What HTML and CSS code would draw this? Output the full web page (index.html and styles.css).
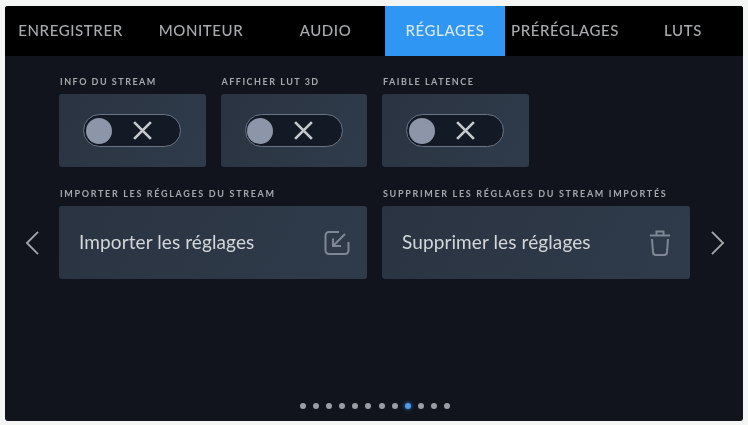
FILE: index.html
```html
<!DOCTYPE html>
<html lang="fr">
<head>
<meta charset="utf-8">
<title>Réglages</title>
<link rel="stylesheet" href="styles.css">
</head>
<body>
<main class="screen">
  <nav class="tabs">
    <a class="tab t1">ENREGISTRER</a>
    <a class="tab t2">MONITEUR</a>
    <a class="tab t3">AUDIO</a>
    <a class="tab t4 active">RÉGLAGES</a>
    <a class="tab t5">PRÉRÉGLAGES</a>
    <a class="tab t6">LUTS</a>
  </nav>
  <section class="settings">
    <div class="toggles">
      <div class="field">
        <div class="label">INFO DU STREAM</div>
        <div class="card toggle-card">
          <div class="toggle"><span class="knob"></span><svg class="x" viewBox="0 0 20 20"><path d="M2 2 18 18M18 2 2 18"/></svg></div>
        </div>
      </div>
      <div class="field">
        <div class="label">AFFICHER LUT 3D</div>
        <div class="card toggle-card">
          <div class="toggle"><span class="knob"></span><svg class="x" viewBox="0 0 20 20"><path d="M2 2 18 18M18 2 2 18"/></svg></div>
        </div>
      </div>
      <div class="field">
        <div class="label">FAIBLE LATENCE</div>
        <div class="card toggle-card">
          <div class="toggle"><span class="knob"></span><svg class="x" viewBox="0 0 20 20"><path d="M2 2 18 18M18 2 2 18"/></svg></div>
        </div>
      </div>
    </div>
    <div class="nav-cell prev">
      <svg class="chevron" viewBox="0 0 16 28"><path d="M14 2 2 14 14 26"/></svg>
    </div>
    <div class="actions">
      <div class="field wide">
        <div class="label wide-label">IMPORTER LES RÉGLAGES DU STREAM</div>
        <div class="card action-card">
          <span class="action-text">Importer les réglages</span>
          <svg class="icon-import" viewBox="0 0 28 28"><path d="M16 3H6a3.500 3.500 0 0 0-3.500 3.500v15A3.500 3.500 0 0 0 6 25h16a3.500 3.500 0 0 0 3.500-3.500V13"/><path d="M22 5 10 17M10 9.500V17h8"/></svg>
        </div>
      </div>
      <div class="field wide">
        <div class="label wide-label">SUPPRIMER LES RÉGLAGES DU STREAM IMPORTÉS</div>
        <div class="card action-card">
          <span class="action-text">Supprimer les réglages</span>
          <svg class="icon-trash" viewBox="0 0 24 28"><path d="M2 6.500H22M8.500 6V2.500H15.500V6"/><path d="M4 10 5 23a3 3 0 0 0 3 3H16a3 3 0 0 0 3-3L20 10"/></svg>
        </div>
      </div>
    </div>
    <div class="nav-cell next">
      <svg class="chevron" viewBox="0 0 16 28"><path d="M2 2 14 14 2 26"/></svg>
    </div>
  </section>
  <div class="dots">
    <span class="dot"></span><span class="dot"></span><span class="dot"></span><span class="dot"></span>
    <span class="dot"></span><span class="dot"></span><span class="dot"></span><span class="dot"></span>
    <span class="dot current"></span><span class="dot"></span><span class="dot"></span><span class="dot"></span>
  </div>
</main>
</body>
</html>
```

FILE: styles.css
```css
* { box-sizing: border-box; }

html, body {
  margin: 0;
  height: 100%;
  background: #f4f5f5;
  overflow: hidden;
}

.screen {
  width: 738px;
  height: 415px;
  margin: 6px 0 0 5px;
  background: #11141c;
  border-radius: 3px;
  display: flex;
  flex-direction: column;
  font-family: Lato, "Noto Sans", sans-serif;
  filter: blur(0.65px);
  overflow: hidden;
}

.tabs {
  display: flex;
  height: 50px;
  flex: none;
  background: #000;
}

.tab {
  display: flex;
  align-items: center;
  justify-content: center;
  padding-bottom: 3px;
  font-size: 15px;
  font-weight: 500;
  letter-spacing: 0.6px;
  color: #a9abae;
  white-space: nowrap;
}

.t1 { width: 131px; }
.t2 { width: 130px; }
.t3 { width: 119px; }
.t4 { width: 120px; }
.t5 { width: 120px; }
.t6 { width: 116px; }

.active {
  background: #2f96f3;
  color: #d8e8f6;
}

.settings {
  display: grid;
  grid-template-columns: 54px 631px 53px;
  grid-template-rows: auto auto;
  padding-top: 21px;
}

.toggles {
  grid-column: 2;
  grid-row: 1;
  display: flex;
  gap: 15px;
  margin-bottom: 22px;
}

.actions {
  grid-column: 2;
  grid-row: 2;
  display: flex;
  gap: 15px;
}

.field { width: 146.5px; flex: none; }
.wide { width: 308px; }

.label {
  height: 17px;
  padding-left: 1px;
  font-size: 9px;
  font-weight: 700;
  letter-spacing: 1.5px;
  line-height: 9px;
  color: #a6a8ac;
  white-space: nowrap;
}

.wide-label { letter-spacing: 1.67px; }

.card {
  height: 73px;
  background: linear-gradient(120deg, #2a3342, #2f3b4b);
  border-radius: 3px;
  display: flex;
  align-items: center;
}

.toggle-card { padding-left: 24px; }

.toggle {
  width: 98px;
  height: 33px;
  border: 1.500px solid #6a7588;
  border-radius: 17px;
  background: #141a25;
  display: flex;
  align-items: center;
  padding-left: 1.500px;
}

.knob {
  width: 26px;
  height: 26px;
  border-radius: 50%;
  background: #8d95a8;
}

.x {
  width: 21px;
  height: 21px;
  margin-left: 20px;
  fill: none;
  stroke: #c4c7cc;
  stroke-width: 2.500;
}

.action-card {
  justify-content: space-between;
  padding: 0 16px 0 20px;
}

.action-text {
  font-size: 19px;
  color: #d4d6d9;
  letter-spacing: 0.1px;
  white-space: nowrap;
  padding-bottom: 2px;
}

.icon-import {
  width: 28px;
  height: 28px;
  fill: none;
  stroke: #7f8794;
  stroke-width: 2;
}

.icon-trash {
  width: 24px;
  height: 28px;
  margin-right: 2px;
  fill: none;
  stroke: #7f8794;
  stroke-width: 2;
}

.nav-cell {
  grid-row: 2;
  align-self: end;
  height: 73px;
  display: flex;
  align-items: center;
}

.prev { grid-column: 1; padding-left: 20px; }
.next { grid-column: 3; padding-left: 20px; }

.chevron {
  width: 15px;
  height: 26px;
  fill: none;
  stroke: #a4a6aa;
  stroke-width: 2;
}

.dots {
  margin-top: auto;
  margin-bottom: 12px;
  display: flex;
  justify-content: center;
  gap: 7.100px;
  padding-left: 2px;
}

.dot {
  width: 6px;
  height: 6px;
  border-radius: 50%;
  background: #9a9da3;
}

.current {
  background: #4f9be8;
  box-shadow: 0 0 4px #2f7fd0;
}
```
